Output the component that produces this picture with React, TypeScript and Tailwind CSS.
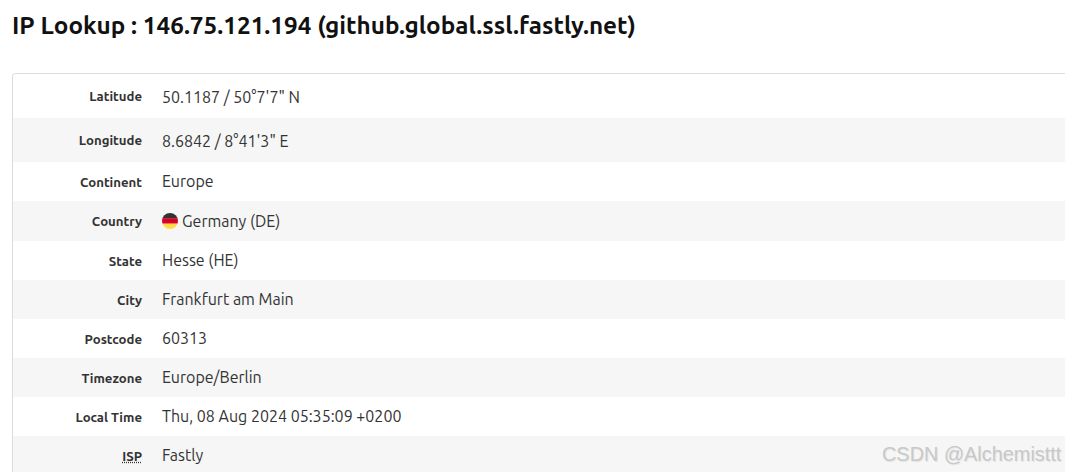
const rows: { label: string; value: string; flag?: boolean; abbr?: boolean; h: string; nudge: string }[] = [
  { label: "Latitude", value: `50.1187 / 50°7'7" N`, h: "h-[44px]", nudge: "pt-[2px]" },
  { label: "Longitude", value: `8.6842 / 8°41'3" E`, h: "h-[44px]", nudge: "pt-[2px]" },
  { label: "Continent", value: "Europe", h: "h-[39px]", nudge: "pb-[2px]" },
  { label: "Country", value: "Germany (DE)", flag: true, h: "h-[40px]", nudge: "" },
  { label: "State", value: "Hesse (HE)", h: "h-[39px]", nudge: "pb-[2px]" },
  { label: "City", value: "Frankfurt am Main", h: "h-[39px]", nudge: "pb-[2px]" },
  { label: "Postcode", value: "60313", h: "h-[39px]", nudge: "pb-[2px]" },
  { label: "Timezone", value: "Europe/Berlin", h: "h-[39px]", nudge: "pb-[2px]" },
  { label: "Local Time", value: "Thu, 08 Aug 2024 05:35:09 +0200", h: "h-[39px]", nudge: "pb-[2px]" },
  { label: "ISP", value: "Fastly", abbr: true, h: "h-[39px]", nudge: "pb-[2px]" },
];

export default function App() {
  return (
    <div className="relative h-[472px] w-[1065px] overflow-hidden bg-white pl-3 pt-[9px] font-['Ubuntu','Noto_Sans',sans-serif] text-[#333]">
      <h1 className="text-[24.3px] font-bold leading-[33px] text-[#111]">IP Lookup : 146.75.121.194 (github.global.ssl.fastly.net)</h1>
      <div className="mt-[31px] overflow-hidden rounded-tl-[4px] border-l border-t border-[#dcdcdc]">
        {rows.map((row, i) => (
          <div key={row.label} className={`flex items-center ${row.h} ${i % 2 === 1 ? "bg-[#f6f6f6]" : "bg-white"}`}>
            <div className="w-[129px] pt-[2px] text-right text-[13.2px] font-bold">
              <span className={row.abbr ? "underline decoration-dotted" : ""}>{row.label}</span>
            </div>
            <div className={`ml-5 flex items-center gap-1 text-[16px] ${row.nudge}`}>
              {row.flag && (
                <svg width="16" height="16" viewBox="0 0 16 16">
                  <clipPath id="c"><circle cx="8" cy="8" r="8" /></clipPath>
                  <g clipPath="url(#c)">
                    <rect width="16" height="5.5" fill="#333" />
                    <rect y="5.3" width="16" height="5.4" fill="#d80027" />
                    <rect y="10.7" width="16" height="5.3" fill="#ffda44" />
                  </g>
                </svg>
              )}
              {row.value}
            </div>
          </div>
        ))}
      </div>
      <div className="absolute left-[882px] top-[440px] font-['Liberation_Sans',sans-serif] text-[19.9px] text-[#c8c8c8] [text-shadow:1px_1px_1px_#e4e4e4]">CSDN @Alchemisttt</div>
    </div>
  );
}
